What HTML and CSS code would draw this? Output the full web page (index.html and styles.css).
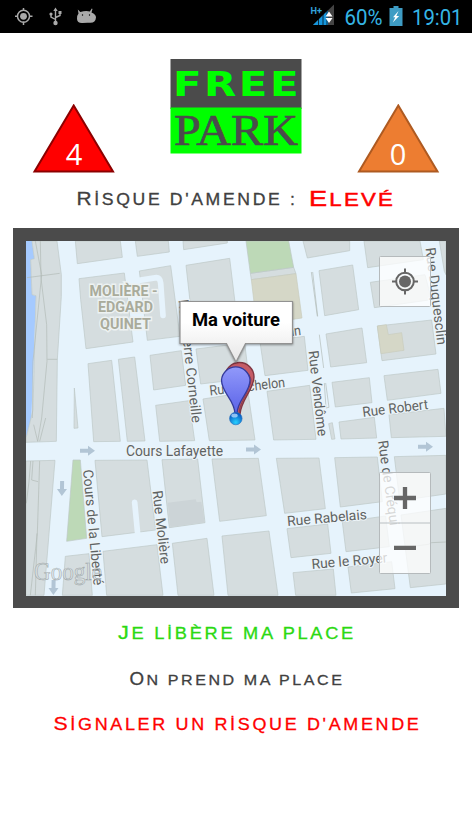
FILE: index.html
```html
<!DOCTYPE html>
<html lang="fr">
<head>
<meta charset="utf-8">
<title>Free Park</title>
<link rel="stylesheet" href="styles.css">
</head>
<body>
<header class="status">
  <svg class="status-left" width="100" height="33" viewBox="0 0 100 33">
    <g fill="none" stroke="#aaa" stroke-width="1.5"><circle cx="23.5" cy="16.3" r="6"/><path d="M23.5 8v3M23.5 21.500v3.500M15 16.300h3M29 16.300h3.500"/></g>
    <circle cx="23.500" cy="16.300" r="3.400" fill="#aaa"/>
    <g fill="none" stroke="#aaa" stroke-width="1.400"><path d="M55.500 10v12M55.500 19.500L51 17v-3M55.500 17.500L60 15.500v-3"/></g>
    <path d="M55.500 7.500l2.200 3.500h-4.400zM58.500 11h3v3h-3z" fill="#aaa"/><circle cx="51" cy="14" r="1.600" fill="#aaa"/><circle cx="55.500" cy="23" r="2.200" fill="#aaa"/>
    <path d="M77.800 9.500l2.500 2.500q5.500-1.500 9.500-.5l2-3 .7.500-1 3.500q4.500 2 4.500 5-.5 5.300-5.500 5.300-4-.3-8 .2-5.200.3-5.500-4 0-4 1.500-5.500z" fill="#aaa"/>
    <circle cx="82.500" cy="15" r=".7"/><circle cx="89.500" cy="15" r=".7"/>
  </svg>
  <svg class="status-right" width="172" height="33" viewBox="300 0 172 33">
    <text class="net" x="310.500" y="13.500" textLength="11.500" lengthAdjust="spacingAndGlyphs">H+</text>
    <path d="M313 25L334 4.500V25z" fill="#444"/><path d="M313 25L328 10.300V25z" fill="#1696dc"/>
    <path d="M318.500 17v8M323 14v11M327 10v15" stroke="#000" stroke-width=".7"/>
    <path d="M329 11.500l3.500 5h-7zM329 23l3.500-5h-7z" fill="#fff"/>
    <text class="clock" x="344.500" y="24.500" textLength="38" lengthAdjust="spacingAndGlyphs">60%</text>
    <path d="M389.500 8h4V6h5v2h4v18h-13z" fill="#3e9cc4"/><path d="M398.500 11l-5.500 6.300h2.300l-2.500 5.200 6.300-6.500h-2.800z" fill="#fff"/>
    <text class="clock" x="412" y="24.500" textLength="50.500" lengthAdjust="spacingAndGlyphs">19:01</text>
  </svg>
</header>
<main>
  <section class="top">
    <svg class="tri" width="84" height="70" viewBox="32 104 84 70">
      <path d="M73.700 105.500L113 171.600H34.500z" fill="#f00" stroke="#8c0000" stroke-width="2"/>
      <text class="count" x="74" y="165" text-anchor="middle">4</text>
    </svg>
    <svg class="logo" width="132" height="95" viewBox="170 59 132 95">
      <path d="M170.500 59h131v50h-131z" fill="#4b4b4b"/><path d="M170.500 107.500h131v46h-131z" fill="#0f0"/>
      <text class="free" x="173" y="96.300" textLength="128" lengthAdjust="spacingAndGlyphs">FREE</text>
      <text class="park" x="174" y="145.300" textLength="124" lengthAdjust="spacingAndGlyphs">PARK</text>
    </svg>
    <svg class="tri" width="84" height="70" viewBox="356 104 84 70">
      <path d="M398.300 105.500L437.500 171.600H359z" fill="#ed7d31" stroke="#ae5a21" stroke-width="2"/>
      <text class="count" x="398" y="165" text-anchor="middle">0</text>
    </svg>
  </section>
  <svg class="line risk" width="472" height="40" viewBox="0 180 472 40" lang="tr">
    <text class="caps dark" x="76.500" y="205.300" textLength="221" lengthAdjust="spacingAndGlyphs"><tspan class="cap">R</tspan>isque d'amende :</text>
    <text class="caps red big" x="309" y="206" textLength="86" lengthAdjust="spacingAndGlyphs"><tspan class="cap">E</tspan>levé</text>
  </svg>
  <section class="frame">
    <svg class="map" width="420" height="355" viewBox="26 241 420 355">
      <defs>
        <linearGradient id="bubble" x1="0" y1="0" x2="0" y2="1"><stop offset=".35" stop-color="#fff"/><stop offset="1" stop-color="#e6e6e6"/></linearGradient>
        <linearGradient id="pin" x1="0" y1="0" x2="0" y2="1"><stop offset="0" stop-color="#9199fa"/><stop offset="1" stop-color="#5a62e8"/></linearGradient>
        <radialGradient id="dot" cx=".5" cy=".8" r=".8"><stop offset="0" stop-color="#25d0ff"/><stop offset="1" stop-color="#0646b8"/></radialGradient>
        <path id="arrow" d="M-7-2H1V-5L8 0 1 5V2H-7z" fill="#b2c5d5"/>
      </defs>
      <g class="blocks" transform="translate(13 228) scale(.33333)">
        <path class="river" d="M39 39H57L64 92 53 95 57 200 69 203 55 570 39 631z"/>
        <path d="M57 39H132L145 140V205L133 395 130 640 39 643V631L60 546 69 203 57 200 53 95 64 92z"/>
        <path d="M187 39H322L328 88 193 107zM367 39H466L469 72 373 85zM510 39H643V45L512 65zM198 152L334 135 360 342 219 362 203 215zM379 129L473 113 501 325 403 337zM519 112L650 91 673 280 540 300zM225 407L296 397 322 640 242 641zM316 394L365 387 396 639 343 640zM411 382L505 368 518 472 422 486zM428 532L528 518 545 638 440 640zM549 363L695 345 708 451 563 468zM570 513L705 492 726 636 589 638zM184 480L195 600 183 601z"/>
        <path class="lane" d="M378 157L430 149Q441 149 443 165L450 262"/>
        <path class="detail" d="M67 39L86 140 60 400 58 570M82 39L84 150 101 290 102 400 86 570 74 640M42 149L140 136M103 394H133M62 590L74 640M98 570L80 640"/>
      </g>
      <g class="blocks" transform="translate(235 228) scale(.33333)">
        <path d="M46 136L176 118 183 137 49 155zM204 39H344V68L217 90zM252 128L353 111 371 245 269 263zM387 39H555L565 95 398 119zM406 163L570 140 590 215 418 239zM613 39H633V140L628 130zM273 318L381 300 395 404 287 417zM427 294L590 276 603 378 441 398zM291 463L403 449 411 524 301 537zM447 443L609 424 618 496 457 517zM462 560L627 541 633 625 469 629zM75 342L208 325 219 427 90 443zM96 490L224 472 243 634 116 636z"/>
        <path class="park-area" d="M33 39H161L176 118 46 136z"/>
        <path class="tan" d="M49 155L183 137 201 270 65 290zM427 294L454 290 460 320 500 314 507 367 438 377z"/>
        <path class="detail" d="M229 132L247 265M233 132L248 265M253 320L266 420M268 465L273 540 282 538 272 465"/>
      </g>
      <g class="blocks" transform="translate(13 410) scale(.33333)">
        <path d="M39 153L126 151 93 556H39zM246 151L402 150 428 360 267 380zM447 149L554 147 576 338 469 353zM157 439L228 431 238 556H148zM270 424L432 404 450 556H281zM478 400L582 385 603 556H495zM597 147L736 145 760 317 620 334zM627 378L768 363 795 556H645z"/>
        <path class="park-area" d="M180 150H202L221 385 161 394z"/>
        <path class="shade" d="M464 278L548 268 551 277 565 275 575 337 472 351z"/>
        <path class="lane" d="M365 277L374 371"/>
        <path class="detail" d="M53 153L48 215 40 280M80 153L73 370 52 556M60 153L56 210 75 215M72 370L67 556"/>
      </g>
      <g class="blocks" transform="translate(235 410) scale(.33333)">
        <path d="M312 36L418 22 425 84 318 87zM281 41L292 38 300 87 290 88zM124 145L252 144 271 296 149 310zM299 143L427 141 442 275 316 291zM478 140L633 136V252L494 272zM156 356L278 342 288 430 168 443zM322 336L452 318 463 410 333 425zM498 315L633 295V522L526 533zM174 488L295 477 303 556H182zM339 471L470 455 480 536 349 549z"/>
        <path class="detail" d="M510 412L580 403 590 398 633 396"/>
      </g>
      <use href="#arrow" transform="translate(87 450.700)"/><use href="#arrow" transform="translate(253 449.500)"/><use href="#arrow" transform="translate(425 446.700)"/>
      <use href="#arrow" transform="translate(62 488) rotate(91)"/><use href="#arrow" transform="translate(53.500 587) rotate(91)"/>
      <g class="district">
        <text x="89.500" y="296" textLength="68" lengthAdjust="spacingAndGlyphs">MOLIÈRE -</text>
        <text x="98" y="312" textLength="55" lengthAdjust="spacingAndGlyphs">EDGARD</text>
        <text x="100" y="328.500" textLength="51" lengthAdjust="spacingAndGlyphs">QUINET</text>
      </g>
      <g class="street">
        <text x="126" y="455.500" textLength="97" lengthAdjust="spacingAndGlyphs">Cours Lafayette</text>
        <text transform="translate(287.500 526) rotate(-5)" textLength="80" lengthAdjust="spacingAndGlyphs">Rue Rabelais</text>
        <text transform="translate(312 569) rotate(-5)" textLength="76" lengthAdjust="spacingAndGlyphs">Rue le Royer</text>
        <text transform="translate(363 417) rotate(-7)" textLength="66" lengthAdjust="spacingAndGlyphs">Rue Robert</text>
        <text transform="translate(210 395.500) rotate(-6.500)" textLength="76" lengthAdjust="spacingAndGlyphs">Rue Michelon</text>
        <text transform="translate(235 343) rotate(-7)" textLength="67" lengthAdjust="spacingAndGlyphs">Rue Vauban</text>
        <text transform="translate(83 470) rotate(84.700)" textLength="116" lengthAdjust="spacingAndGlyphs">Cours de la Liberté</text>
        <text transform="translate(152.500 491) rotate(83.500)" textLength="74" lengthAdjust="spacingAndGlyphs">Rue Molière</text>
        <text transform="translate(178.500 300) rotate(83.700)" textLength="124" lengthAdjust="spacingAndGlyphs">Rue Pierre Corneille</text>
        <text transform="translate(308.500 351) rotate(83.700)" textLength="86" lengthAdjust="spacingAndGlyphs">Rue Vendôme</text>
        <text transform="translate(378 441) rotate(82)" textLength="86" lengthAdjust="spacingAndGlyphs">Rue de Créqui</text>
        <text transform="translate(425.500 248) rotate(83)" textLength="98" lengthAdjust="spacingAndGlyphs">Rue Duquesclin</text>
      </g>
      <text class="google" x="34" y="579.500" textLength="68" lengthAdjust="spacingAndGlyphs">Google</text>
      <path d="M238 414C239 402 225 389 225 377A14.500 14.500 0 0 1 254 377C254 389 241 400 240 414z" fill="#c55b66" stroke="#803642" stroke-width="1.400"/>
      <path d="M237 414C238 402 223 390 223 379A14.500 14.500 0 0 1 251 379C251 390 239 402 239 414z" fill="#c55b66" stroke="#803642" stroke-width=".8"/>
      <path d="M235 414C235 400 221.500 393 221.500 380A14.300 14.300 0 0 1 250 380C250 393 237 400 237 414z" fill="url(#pin)" stroke="#343b9c" stroke-width="1.300"/>
      <circle cx="235.800" cy="418.500" r="6.300" fill="url(#dot)" stroke="#2872bd" stroke-width=".6"/><ellipse cx="234.500" cy="415.500" rx="3.200" ry="2" fill="#b9ddff" opacity=".75"/>
      <path class="bubble" d="M180 301.500H292.500V343.500H245.500L236 362 226.500 343.500H180z" fill="url(#bubble)"/>
      <text class="title" x="192" y="326" textLength="88" lengthAdjust="spacingAndGlyphs">Ma voiture</text>
      <rect class="control" x="379.500" y="256.500" width="51" height="50" rx="1"/>
      <g fill="none" stroke="#666" stroke-width="2"><circle cx="405" cy="281.500" r="8.800"/><path d="M405 268.500v5M405 289.500v5M392 281.500h5M413 281.500h5"/></g><circle cx="405" cy="281.500" r="6" fill="#666"/>
      <rect class="control" x="379.500" y="472.500" width="51" height="101" rx="1"/>
      <path d="M380 523h50" stroke="#b9bfc2" stroke-width="1"/><path d="M394 498h22M405 487v22M394 547.800h22" stroke="#666" stroke-width="4.300"/>
    </svg>
  </section>
  <nav class="actions">
    <svg class="line" width="472" height="36" viewBox="0 615 472 36" lang="tr"><text class="caps green" x="118" y="639.300" textLength="238" lengthAdjust="spacingAndGlyphs"><tspan class="cap">J</tspan>e libère ma place</text></svg>
    <svg class="line" width="472" height="46" viewBox="0 655 472 46" lang="tr"><text class="caps dark small" x="129.500" y="685" textLength="215" lengthAdjust="spacingAndGlyphs"><tspan class="cap">O</tspan>n prend ma place</text></svg>
    <svg class="line" width="472" height="46" viewBox="0 703 472 46" lang="tr"><text class="caps red" x="53.500" y="729.500" textLength="368" lengthAdjust="spacingAndGlyphs"><tspan class="cap">S</tspan>ignaler un risque d'amende</text></svg>
  </nav>
</main>
</body>
</html>
```
FILE: styles.css
```css
body { margin: 0; background: #fff; font-family: Roboto, "Liberation Sans", sans-serif; }
svg { display: block; }
.status { display: flex; justify-content: space-between; height: 33px; background: #000; }
.net { font: bold 9.5px Roboto, sans-serif; fill: #33a3d8; }
.clock { font: 21.5px Roboto, sans-serif; fill: #35b5e5; }
.top { display: grid; grid-template-columns: 138px 186px 84px; align-items: end; height: 141px; padding: 0 32px; }
.logo { margin-bottom: 20px; }
.risk { margin-top: 6px; }
.count { font: 29px "Open Sans", "Noto Sans", sans-serif; fill: #fff; }
.free { font: 900 34px "DejaVu Sans", sans-serif; letter-spacing: 2px; fill: #0f0; }
.park { font: 44.5px "Liberation Serif", serif; fill: #4b4b4b; stroke: #4b4b4b; stroke-width: .7; }
.caps { font: 16px "Liberation Sans", sans-serif; text-transform: uppercase; letter-spacing: 2.4px; stroke-width: .3; }
.cap { font-size: 19px; }
.big { font-size: 18px; letter-spacing: 1.8px; stroke-width: .5; }
.big .cap { font-size: 22px; }
.small { font-size: 15px; }
.small .cap { font-size: 17.5px; }
.dark { fill: #404040; stroke: #404040; }
.red { fill: #f00; stroke: #f00; }
.green { fill: #2bd911; stroke: #2bd911; }
.frame { box-sizing: border-box; width: 446px; height: 380px; margin: 8px 13px 0; padding: 13px 13px 12px; background: #4b4b4b; }
.map { background: #e6f3fc; }
.blocks path { fill: #d5dddf; stroke: #bdc7c5; stroke-width: 2; }
.blocks .river { fill: #a5caff; stroke: none; }
.blocks .lane { fill: none; stroke: #e6f3fc; stroke-width: 17; stroke-linecap: round; }
.blocks .detail { fill: none; stroke: #b1b9b5; }
.blocks .park-area { fill: #bdd9b7; }
.blocks .tan { fill: #d5d7c7; stroke: #c8cbbd; }
.blocks .shade { fill: #ccd4d7; stroke: none; }
.district { font: bold 15.500px Roboto, sans-serif; fill: #a9ab9b; stroke: #edf2f2; stroke-width: 3; paint-order: stroke; }
.street { font: 14px Roboto, sans-serif; fill: #5e6363; stroke: #edf4f8; stroke-width: 2; paint-order: stroke; }
.google { font: 25px "Liberation Serif", serif; fill: #dde3e5; fill-opacity: .6; stroke: #8e9698; stroke-opacity: .8; stroke-width: .6; }
.bubble { stroke: #929292; stroke-width: 1.2; filter: drop-shadow(0 1px 1px #0006); }
.title { font: bold 18px Roboto, sans-serif; fill: #000; }
.control { fill: #fff; fill-opacity: .75; stroke: #b5babc; stroke-width: 1; }
.actions { display: flex; flex-direction: column; padding-top: 7px; gap: 4px; }
.actions .line:last-child { margin-top: -2px; }
```
